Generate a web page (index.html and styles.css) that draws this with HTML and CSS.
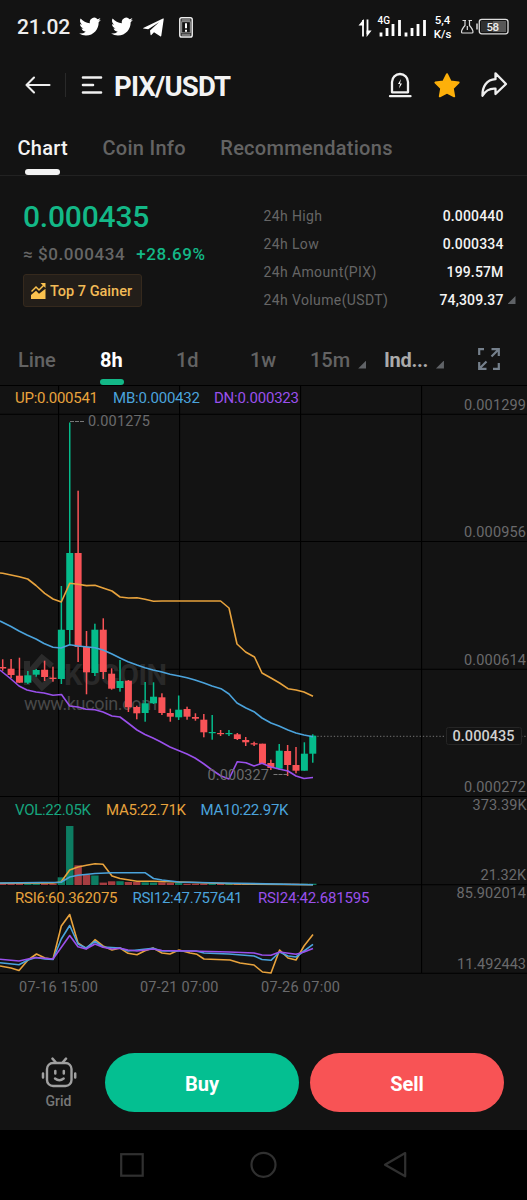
FILE: index.html
```html
<!DOCTYPE html>
<html lang="en">
<head>
<meta charset="utf-8">
<title>PIX/USDT</title>
<link rel="stylesheet" href="styles.css">
</head>
<body>
<div class="screen">
  <div class="status">
    <span class="clock">21.02</span>
    <svg class="tw" width="22" height="20" viewBox="0 0 24 22"><path d="M24 3.1c-.9.4-1.800.7-2.800.8 1-.6 1.800-1.600 2.200-2.700-1 .6-2 1-3.100 1.200A4.900 4.900 0 0 0 11.900 6.900C7.800 6.700 4.200 4.700 1.700 1.700.4 3.900 1 6.800 3.200 8.300c-.8 0-1.600-.2-2.200-.6 0 2.300 1.600 4.400 3.900 4.900-.7.2-1.500.2-2.200.1.600 2 2.400 3.400 4.600 3.400A9.900 9.900 0 0 1 0 18.100 14 14 0 0 0 7.500 20.300c9.100 0 14.300-7.700 14-14.600 1-.7 1.800-1.600 2.500-2.600z"/></svg>
    <svg class="tw second" width="22" height="20" viewBox="0 0 24 22"><path d="M24 3.1c-.9.4-1.800.7-2.800.8 1-.6 1.800-1.600 2.200-2.700-1 .6-2 1-3.100 1.200A4.900 4.900 0 0 0 11.900 6.900C7.800 6.700 4.200 4.700 1.700 1.700.4 3.900 1 6.800 3.200 8.300c-.8 0-1.600-.2-2.200-.6 0 2.300 1.600 4.400 3.900 4.900-.7.2-1.500.2-2.200.1.600 2 2.400 3.400 4.600 3.400A9.900 9.900 0 0 1 0 18.100 14 14 0 0 0 7.500 20.300c9.100 0 14.300-7.700 14-14.600 1-.7 1.800-1.600 2.500-2.600z"/></svg>
    <svg class="tg" width="21" height="19" viewBox="0 0 21 19"><path d="M.2 10 20 .5c.6-.2.9.1.7.7L18.300 17.700c-.1.700-.6.900-1.100.5L11 14.200 8.400 16.900c-.5.4-.8.300-.9-.3L7 12.400 16 4.300 5.200 11.300.3 10.500c-.4-.1-.5-.3-.1-.5z"/></svg>
    <svg class="ph" width="14" height="21" viewBox="0 0 14 21"><rect x=".8" y=".8" width="12.400" height="19.200" rx="1.800" fill="none" stroke="#eee" stroke-width="1.500"/><path d="M2.500 3h9M2.500 18h9" stroke="#ddd" stroke-width="1"/><rect x="2.700" y="4.700" width="8.600" height="11.200" fill="none" stroke="#aaa" stroke-width=".9"/><path d="M7 6.300v5M7 12.800v2" stroke="#fff" stroke-width="2"/></svg>
    <svg class="net" width="69" height="24" viewBox="358 13 69 24">
      <g stroke="#fff" fill="none" stroke-width="1.800"><path d="M363 19v16.500M367.500 18.500V33"/></g>
      <path d="M358.500 24.500 363.900 18v6.500zM366.600 29.500h5L366.600 36z" fill="#fff"/>
      <path d="M381 31.500v4M387 27v8M393 23v12M399.500 19v16M406 31.500v4M412 27v8M418 23v12M424.500 19v16" stroke="#fff" stroke-width="2.800" />
      <text x="377.500" y="22.800" class="g4" textLength="12.500">4G</text>
    </svg>
    <div class="speed"><span>5,4</span><span>K/s</span></div>
    <svg class="batt" width="50" height="18" viewBox="460 17 50 18">
      <path d="M462.500 20.500h3.500M468.500 20.500h3.500M465 20.500v5q-3.500 4-3.500 6.500 0 1 1 1h9.500q1 0 1-1 0-2.500-3.500-6.500v-5M467.300 26v4" fill="none" stroke="#ddd" stroke-width="1.200"/>
      <path d="M477 23.500v6" stroke="#ddd" stroke-width="1.500"/>
      <rect x="479.300" y="19.300" width="28.700" height="14.500" rx="2.500" fill="none" stroke="#ddd" stroke-width="1.300"/>
      <rect x="481" y="21" width="13" height="11" fill="#303030"/><rect x="493" y="21" width="13" height="11" fill="#575757"/>
      <text x="486.500" y="30.600" class="pct" textLength="12.500">58</text>
    </svg>
  </div>

  <div class="header">
    <svg class="back" width="26" height="18" viewBox="0 0 26 18"><path d="M9 1.500 1.500 9 9 16.500M1.500 9H24.500" fill="none" stroke="#eee" stroke-width="2.100" stroke-linecap="round" stroke-linejoin="round"/></svg>
    <i class="divider"></i>
    <svg class="menu" width="22" height="20" viewBox="0 0 22 20"><path d="M2 2.500h18M2 10h10M2 17.500h18" stroke="#f0f0f0" stroke-width="2.600" stroke-linecap="round"/></svg>
    <h1>PIX/USDT</h1>
    <svg class="actions" width="122" height="30" viewBox="387 70 122 30">
      <path d="M393 92.300V82a8 8 0 0 1 16 0v10.300zM391 96.200h20.500" fill="none" stroke="#f2f2f2" stroke-width="2.300" stroke-linecap="round" stroke-linejoin="round"/>
      <path d="m402 79-3 5h2l-1 4.500 3-5h-2z" fill="#fff"/>
      <path d="m448 74.200 3.600 7.200 8 1.200-5.800 5.800 1.400 7.900-7.200-3.700-7.200 3.700 1.400-7.900-5.800-5.800 8-1.200z" fill="#fdb00a" stroke="#fdb00a" stroke-width="2" stroke-linejoin="round"/>
      <path d="M496.500 73.300 507 84l-10.500 10v-5.300c-6-.5-9.700 1.500-13 7-.3-9 4-16 13-16.500z" fill="none" stroke="#eee" stroke-width="2.300" stroke-linejoin="round"/>
    </svg>
  </div>

  <div class="tabs">
    <span class="tab on">Chart</span><span class="tab">Coin Info</span><span class="tab">Recommendations</span>
  </div>

  <div class="summary">
    <div class="quote">
      <div class="price">0.000435</div>
      <div class="sub"><span class="usd">≈ $0.000434</span><span class="chg">+28.69%</span></div>
      <div class="badge">
        <svg width="15" height="16" viewBox="0 0 15 16"><path d="M.5 8.500 5 4l3 3 5-5" fill="none" stroke="#fbc24e" stroke-width="1.500"/><path d="M9.500 0h5v5z" fill="#fbc24e"/><path d="M0 12 5 7.800l3 3 6.500-5V16H0z" fill="#fbc24e"/></svg>
        <span>Top 7 Gainer</span>
      </div>
    </div>
    <div class="stats">
      <div class="row"><span>24h High</span><b>0.000440</b></div>
      <div class="row"><span>24h Low</span><b>0.000334</b></div>
      <div class="row"><span>24h Amount(PIX)</span><b>199.57M</b></div>
      <div class="row"><span>24h Volume(USDT)</span><b>74,309.37</b><i class="tri"></i></div>
    </div>
  </div>

  <div class="ranges">
    <span>Line</span><span class="active">8h</span><span>1d</span><span>1w</span><span>15m<i class="tri"></i></span><span class="ind">Ind...<i class="tri"></i></span>
    <svg width="22" height="22" viewBox="0 0 22 22"><path d="M1.200 7V1.200H6M20.800 15v5.800H15M13.500 1.200h7.300V8M1.200 14v6.800H8.500M20.500 1.500l-7 7M1.500 20.500l7-7" fill="none" stroke="#75808c" stroke-width="2.200"/></svg>
  </div>

  <svg class="chart" id="chart" width="527" height="615" viewBox="0 385 527 615">
    <g stroke="#000" stroke-width="1.100">
      <path d="M0 385.500H527M0 414.200H527M0 541.500H527M0 669.300H527M0 796.500H527M0 884.800H527M0 973.300H527M58.600 385V973M179.600 385V973M300.600 385V973M421.600 385V973"/>
    </g>
    <g fill="none" stroke="#2b2b2b" stroke-width="6"><path d="M52 666 42 658 29 673l13 14 10-9M27 661v24"/></g>
    <text x="64" y="684.500" class="brand" textLength="103">KUCOIN</text>
    <text x="24" y="710" class="site" textLength="133">www.kucoin.com</text>
    <path d="M314 736.300H446M521 736.300h6" stroke="#606060" stroke-width="1.200" stroke-dasharray="1.300 2"/>
    <g id="volume"></g>
    <g id="candles"></g>
    <g fill="none" stroke-width="1.600" stroke-linejoin="round">
      <polyline stroke="#e8a33d" points="0,573 2.700,573.300 11,575 19.300,576.700 27.700,579 36,585.500 44.700,593.300 53,599 61.300,602 69.700,583.300 78,584.300 86.500,585.600 95,585.300 103,588 112,591 120,597 128.500,598 137,597.700 145,599.300 153.500,601.300 162,601 220.600,601 229,608 237,644 245.600,652 254.500,657 262,673 271,678 279.600,683 288,688.700 296,690 304,692 313,696.300"/>
      <polyline stroke="#4ba3dc" points="0,621 11,626.500 19,631 27,635 36,639 44,643.500 53,647.300 61,648 69.700,644.700 78,646 95,647.700 103,650 112,654 120,658 128,661.700 137,665 145,667.700 153,670 162,672 170,674.300 179,676 187,677.700 195,680 204,683 212,686 221,688.700 229,694 237,703 246,708 254,711.700 262,718 271,723 279,726 288,730 296,733 304,735 313,736.700"/>
      <polyline stroke="#9a50ec" points="0,670 11,679 19,686 27,690 36,692 44,693 53,695.300 61.500,694.500 69.700,706 78,707 86,709.300 95,709.700 103,712 112,716 120,717 128,723 137,730 145,734.500 153,738 160,741.500 170,747 187,754 195,758 204,764 212,770 221,776 229,779 237.300,761.700 246,762.700 254,766 262,763.300 271,767 279,769 288,771 296,776 304,778.500 313,777.500"/>
      <polyline stroke="#e8a33d" points="0,883.300 53,883 61,882 69.700,870 78,867 86.500,865.300 95,863.700 103,864.300 112,876 120,878.500 137,881.300 153,881.300 180,882 240,884 313,884.700"/>
      <polyline stroke="#4ba3dc" points="0,883 61,882.300 69.700,877 78,875.300 95,873.500 112,872.700 145,872.700 153.500,878.500 162,880 179,882 220,883 313,884.700"/>
      <polyline stroke="#e8a33d" points="0,966 11,968 19,970.500 28,960 36.500,954 45,958 53,959.300 61.300,926 69.700,914.500 78,943 86.500,948.700 95,939.700 103,946 112,950 120,948 128,953.300 137,954.700 145,950.700 153,948 162,953 170,954 179,950 190,953 197,954.300 204,959 230,960 240,963 254,965 262.500,972 271,973 279.600,950 288,958 296,960 304,946 313,934.500"/>
      <polyline stroke="#4ba3dc" points="0,962.700 19,964.700 28,960 36,957.500 45,959 53,959.500 61.300,939 69.700,925.500 78,944 86,948 95,941.500 103,947 120,948 128,951 153,948.300 162,951 196,951 204,953 229,954 254,956 262,959.500 271,960.300 279.600,952 288,956 296,957 304,951 313,944.300"/>
      <polyline stroke="#9a50ec" points="0,959.300 19,961 28,959 36,957.500 53,959 69.700,935.500 78,946.700 86,949 95,944 103,947.300 112,949 120,948.300 128,950 137,951 153,949 162,950.500 190,951 229,952 254,953 262,955 271,955.300 279.600,952 296,954.300 304,952 313,948.500"/>
    </g>
    <path d="M70 421.500h14M273.500 774.500H288" stroke="#777" stroke-width="1.200" stroke-dasharray="4 1"/>
    <g class="legend">
      <text x="15" y="402.500" fill="#e8a33d" textLength="83">UP:0.000541</text>
      <text x="113" y="402.500" fill="#4ba3dc" textLength="87">MB:0.000432</text>
      <text x="214" y="402.500" fill="#9a50ec" textLength="85">DN:0.000323</text>
      <text x="15" y="814.500" fill="#16a57e" textLength="76">VOL:22.05K</text>
      <text x="106" y="814.500" fill="#e8a33d" textLength="80">MA5:22.71K</text>
      <text x="200.500" y="814.500" fill="#4ba3dc" textLength="88">MA10:22.97K</text>
      <text x="15" y="902.500" fill="#e8a33d" textLength="102.500">RSI6:60.362075</text>
      <text x="132.500" y="902.500" fill="#4ba3dc" textLength="110">RSI12:47.757641</text>
      <text x="258" y="902.500" fill="#9a50ec" textLength="111.500">RSI24:42.681595</text>
    </g>
    <g class="axis">
      <text x="88" y="426" textLength="62">0.001275</text>
      <text x="207.500" y="779.500" textLength="61.500">0.000327</text>
      <text x="464" y="410" textLength="62">0.001299</text>
      <text x="464" y="537" textLength="62">0.000956</text>
      <text x="464" y="665" textLength="62">0.000614</text>
      <text x="464" y="792" textLength="62">0.000272</text>
      <text x="472.500" y="810" textLength="54">373.39K</text>
      <text x="480.500" y="880" textLength="45.500">21.32K</text>
      <text x="456.500" y="897.500" textLength="69.500">85.902014</text>
      <text x="457" y="968.500" textLength="69">11.492443</text>
      <text x="19" y="991.500" textLength="79">07-16 15:00</text>
      <text x="140" y="991.500" textLength="78.500">07-21 07:00</text>
      <text x="261" y="991.500" textLength="79">07-26 07:00</text>
    </g>
    <rect x="446.500" y="727.500" width="75" height="17" rx="2" fill="#131313" stroke="#252525"/>
    <text x="452.500" y="740.500" class="now" textLength="62">0.000435</text>
  </svg>

  <div class="trade">
    <div class="grid">
      <svg width="36" height="31" viewBox="0 0 36 31"><g fill="none" stroke="#a0a0a0" stroke-width="2.400" stroke-linecap="round"><rect x="6" y="6" width="24.500" height="23" rx="6"/><path d="M14.500 5 11.500 1.700M22 5l3-3.300M2 16.500v4M34.200 16.500v4M14.300 14v2.500M22.800 14v2.500" stroke-width="2.500"/><path d="M14 21.500q4.300 3.500 8.700 0"/></g></svg>
      <span>Grid</span>
    </div>
    <button class="buy">Buy</button>
    <button class="sell">Sell</button>
  </div>

  <div class="navbar">
    <svg width="527" height="70" viewBox="0 1130 527 70"><g fill="none" stroke="#303030" stroke-width="2.200"><rect x="121.200" y="1154.200" width="21.500" height="21.500"/><circle cx="263.500" cy="1164.800" r="12"/><path d="M405.200 1153 385 1164.800l20.200 11.500z" stroke-linejoin="round"/></g></svg>
  </div>
</div>
<script src="chart.js"></script>
</body>
</html>
```
FILE: styles.css
```css
* { box-sizing: border-box; }
body { margin: 0; background: #131313; font-family: Roboto, "Liberation Sans", sans-serif; color: #fff; }
svg { display: block; flex: none; }
.screen { width: 527px; height: 1200px; display: flex; flex-direction: column; overflow: hidden; }
.screen > * { flex: none; }

.status { height: 54px; display: flex; align-items: center; padding-left: 17px; }
.status > * { flex: none; }
.clock { width: 62px; font-size: 21px; font-weight: 500; color: #eee; letter-spacing: -.1px; }
.tw path, .tg path { fill: #fff; }
.second { margin-left: 10px; }
.tg { margin-left: 10px; }
.ph { margin-left: 15px; }
.net { margin: -3px 0 0 165px; }
.g4 { font: 500 10px Roboto, sans-serif; fill: #fff; }
.speed { display: flex; flex-direction: column; align-items: center; width: 19px; margin-left: 6px; font-size: 11.5px; line-height: 14px; font-weight: 500; white-space: nowrap; }
.batt { margin: -2px 0 0 8px; }
.pct { font: 500 11.500px Roboto, sans-serif; fill: #eee; }

.header { height: 62px; display: flex; align-items: center; padding-left: 25px; }
.divider { width: 1px; height: 24px; background: #292929; margin: 0 15px 0 14px; }
.header h1 { width: 272px; margin: 3px 0 0 11px; font-size: 27.5px; line-height: 32px; font-weight: 700; letter-spacing: -.8px; color: #f3f3f3; }

.tabs { height: 60px; border-bottom: 1px solid #222; display: flex; padding: 0 17.5px; gap: 34.5px; }
.tab { display: flex; flex-direction: column; align-items: center; justify-content: space-between; font-size: 20px; line-height: 24px; font-weight: 500; color: #636363; padding-top: 19.5px; letter-spacing: .27px; }
.tab.on { color: #f4f4f4; }
.tab.on::after { content: ""; width: 35px; height: 6px; border-radius: 3px; background: #f2f2f2; }

.summary { height: 160px; display: flex; padding-left: 23px; }
.quote { width: 240.5px; padding-top: 23px; }
.price { font-size: 30px; line-height: 36px; font-weight: 500; color: #13b887; letter-spacing: -.2px; }
.sub { display: flex; gap: 11px; margin-top: 8px; font-size: 17px; line-height: 22px; font-weight: 500; letter-spacing: .57px; }
.usd { color: #666; }
.chg { color: #13b887; }
.badge { width: 119px; height: 33px; margin-top: 9px; border: 1px solid #35291d; border-radius: 3px; background: #231e19; display: flex; align-items: center; gap: 4px; padding: 1px 0 0 7px; font-size: 14.500px; font-weight: 500; color: #f2bb57; white-space: nowrap; }
.stats { width: 252px; padding-top: 26px; }
.row { height: 28px; display: flex; align-items: center; font-size: 14px; line-height: 28px; color: #666; letter-spacing: .38px; }
.row b { width: 112px; margin-left: auto; margin-right: 12px; text-align: right; color: #f3f3f3; font-weight: 500; letter-spacing: .15px; }
.row .tri { margin: 0 0 0 -8px; width: 8px; height: 8px; }
.tri { display: inline-block; width: 8px; height: 8px; background: #606367; clip-path: polygon(100% 0, 100% 100%, 0 100%); }

.ranges { height: 49px; display: grid; grid-template-columns: 82px 76px 74px 60px 74px 94px 22px; padding-left: 18px; font-size: 20px; font-weight: 500; line-height: 24px; color: #636363; padding-top: 11.5px; }
.ranges .active { position: relative; color: #fff; font-weight: 700; }
.ranges .active::after { content: ""; position: absolute; left: 0; top: 31px; width: 24px; height: 6px; border-radius: 3px; background: #13b887; }
.ranges .tri { margin-left: 8px; margin-bottom: -2px; }
.ranges .ind { color: #aaa; font-weight: 700; letter-spacing: -.3px; }
.chart { position: relative; z-index: -1; }
.chart text { font-family: Roboto, "Liberation Sans", sans-serif; }
.legend { font-size: 15px; }
.axis { font-size: 14.500px; fill: #6a6a6c; }
.now { font-size: 14.500px; fill: #d0d0d0; font-weight: 500; }
.brand { font-size: 29px; font-weight: 700; fill: #292929; }
.site { font-size: 18px; fill: #484848; }

.trade { height: 130px; padding: 53px 23px 0 40px; display: flex; }
.grid { width: 37px; display: flex; flex-direction: column; align-items: center; margin: 4px 28px 0 0; font-size: 14px; line-height: 18px; font-weight: 500; color: #777; gap: 4px; }
.trade button { height: 59px; border: 0; border-radius: 30px; color: #fff; font: 700 20px Roboto, "Liberation Sans", sans-serif; padding: 3px 0 0; }
.buy { width: 194px; background: #04bf91; margin-right: 11px; }
.sell { width: 194px; background: #f85355; }
.navbar { height: 70px; background: #000; }
```
FILE: chart.js
```js
const UP = '#05bb8b', DOWN = '#f95357';
// direction, body top, body bottom, wick top, wick bottom
const candles = [
  [0,667,668.5,659.3,670.7],[0,668.7,675,659,678],[0,675.7,682.7,657.7,683],[1,675.3,682.7,671,684],
  [1,670,674.7,669,676.7],[0,669.7,677,660.7,681],[0,677.7,679,666.7,681.7],[1,629.7,679,586,684],
  [1,553,630,422.5,644.7],[0,553,647,490.7,662],[0,647,672.3,631,694.3],[1,629.7,673,623.7,676],
  [0,629.7,672,618.3,679],[0,673.7,688.7,668.3,689.7],[1,681,688,660,691.7],[0,680.7,707.3,680,712],
  [0,707,713.3,705.7,719.3],[1,703.3,713,682,721.7],[1,696.7,703.3,682.3,704],[0,697.3,713,693.3,715],
  [0,713,716.7,708.7,721.7],[1,709.7,717.3,695.5,720],[0,709,716.7,706.7,719.7],[0,717,718.7,713.3,720.7],
  [0,719.7,732.3,714,737.3],[1,732,733.2,715,739.7],[0,733,734.2,730,736],[1,733,734.2,730,736],
  [0,734.3,739,733,740],[0,740,742.3,737,746],[0,743.2,744.5,741.7,746],[0,743.7,763.7,743.7,764],
  [0,763,768,759.7,770],[1,750.7,768.7,744,770],[0,751,765,745,776],[0,765,770.7,747,773.3],
  [1,753.7,770.7,742.3,770.7],[1,735.7,753.7,734.3,762.7]
];
const volumeTop = {7:877.3,8:826,9:865.3,10:874.7,11:875.5,12:882.6,13:881.3,14:881.2,15:882,16:882,17:882.3,18:882.5,19:882.3,20:883,21:882.7};
const rect = (x, y, w, h, fill) => `<rect x="${x}" y="${y}" width="${w}" height="${h}" fill="${fill}"/>`;
let bodies = '', bars = '';
candles.forEach(([up, top, bottom, high, low], i) => {
  const x = 2.7 + i * 8.38, color = up ? UP : DOWN;
  bodies += rect(x - 0.75, high, 1.5, low - high, color) + rect(x - 3.5, top, 7, bottom - top, color);
  const v = volumeTop[i] || 883.7;
  bars += rect(x - 3.7, v, 7.4, 885 - v, up ? '#0d7d62' : '#a63d41');
});
document.getElementById('candles').innerHTML = bodies;
document.getElementById('volume').innerHTML = bars;
```
